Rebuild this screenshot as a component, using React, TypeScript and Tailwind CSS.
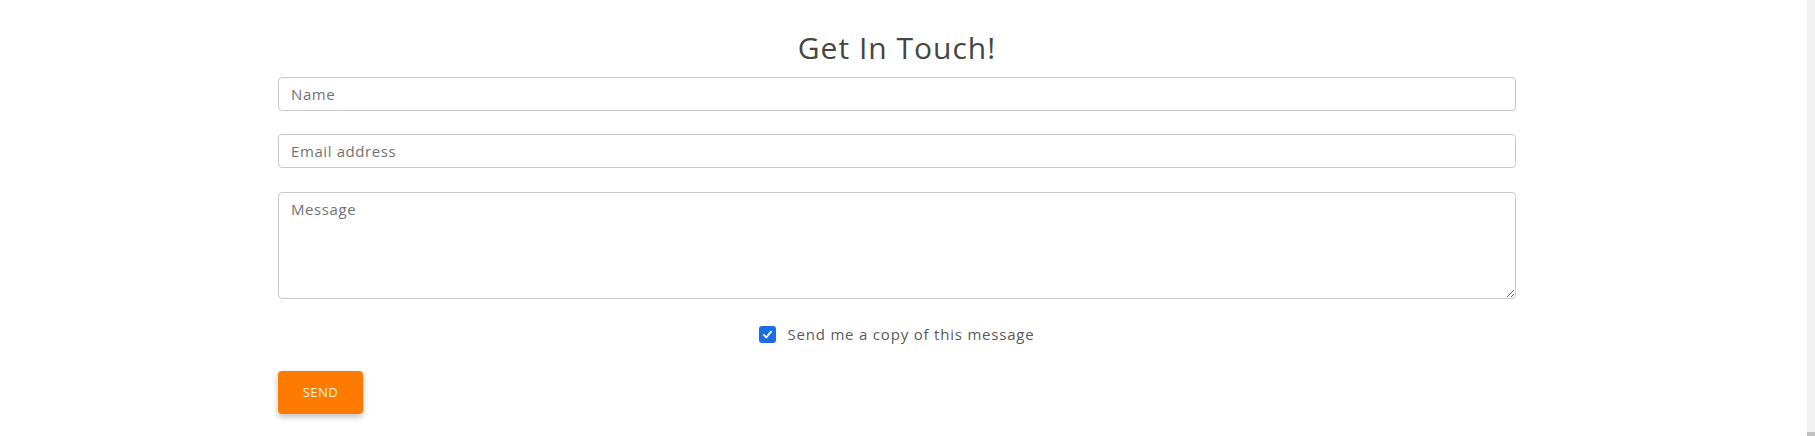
export default function App() {
  return (
    <div className="flex h-[436px] w-full bg-white" style={{ fontFamily: '"Open Sans", "Liberation Sans", sans-serif' }}>
      {/* Contact form */}
      <main className="flex-1 pl-[278px]">
        <form className="flex w-[1238px] flex-col" onSubmit={(e) => e.preventDefault()}>
          <h2 className="pt-[30px] text-center text-[30px] leading-[36px] font-normal tracking-[1px] text-[#454545]">Get In Touch!</h2>

          <input
            type="text"
            placeholder="Name"
            className="mt-[11px] h-[34px] w-full rounded-[4px] border border-[#c8c8c8] px-[12px] text-[15px] tracking-[0.6px] text-[#555] placeholder:text-[#737373] outline-none"
          />
          <input
            type="email"
            placeholder="Email address"
            className="mt-[23px] h-[34px] w-full rounded-[4px] border border-[#c8c8c8] px-[12px] text-[15px] tracking-[0.6px] text-[#555] placeholder:text-[#737373] outline-none"
          />
          <textarea
            placeholder="Message"
            className="mt-[24px] h-[107px] w-full rounded-[4px] border border-[#c8c8c8] px-[12px] py-[5px] text-[15px] tracking-[0.6px] text-[#555] placeholder:text-[#737373] outline-none"
          />

          <label className="mt-[25px] flex h-[20px] items-center justify-center gap-[11px] text-[15px] tracking-[0.8px] text-[#5a5a5a]">
            <span className="flex h-[17px] w-[17px] items-center justify-center rounded-[3px] bg-[#1a6de6]">
              <svg viewBox="0 0 16 16" className="h-[13px] w-[13px]" fill="none" stroke="white" strokeWidth="2.2" strokeLinecap="round" strokeLinejoin="round">
                <path d="M3.5 8.5l3 3 6-7" />
              </svg>
            </span>
            Send me a copy of this message
          </label>

          <button
            type="submit"
            className="mt-[27px] h-[43px] w-[85px] rounded-[4px] bg-[#ff7b00] text-[13px] tracking-[0.5px] text-[#fff3e6] shadow-[0_3px_6px_rgba(0,0,0,0.25)]"
          >
            SEND
          </button>
        </form>
      </main>

      {/* Scrollbar track */}
      <div className="flex w-[8px] flex-col justify-end bg-[#f1f1f1]">
        <div className="h-[4px] bg-[#c1c1c1]" />
      </div>
    </div>
  )
}
